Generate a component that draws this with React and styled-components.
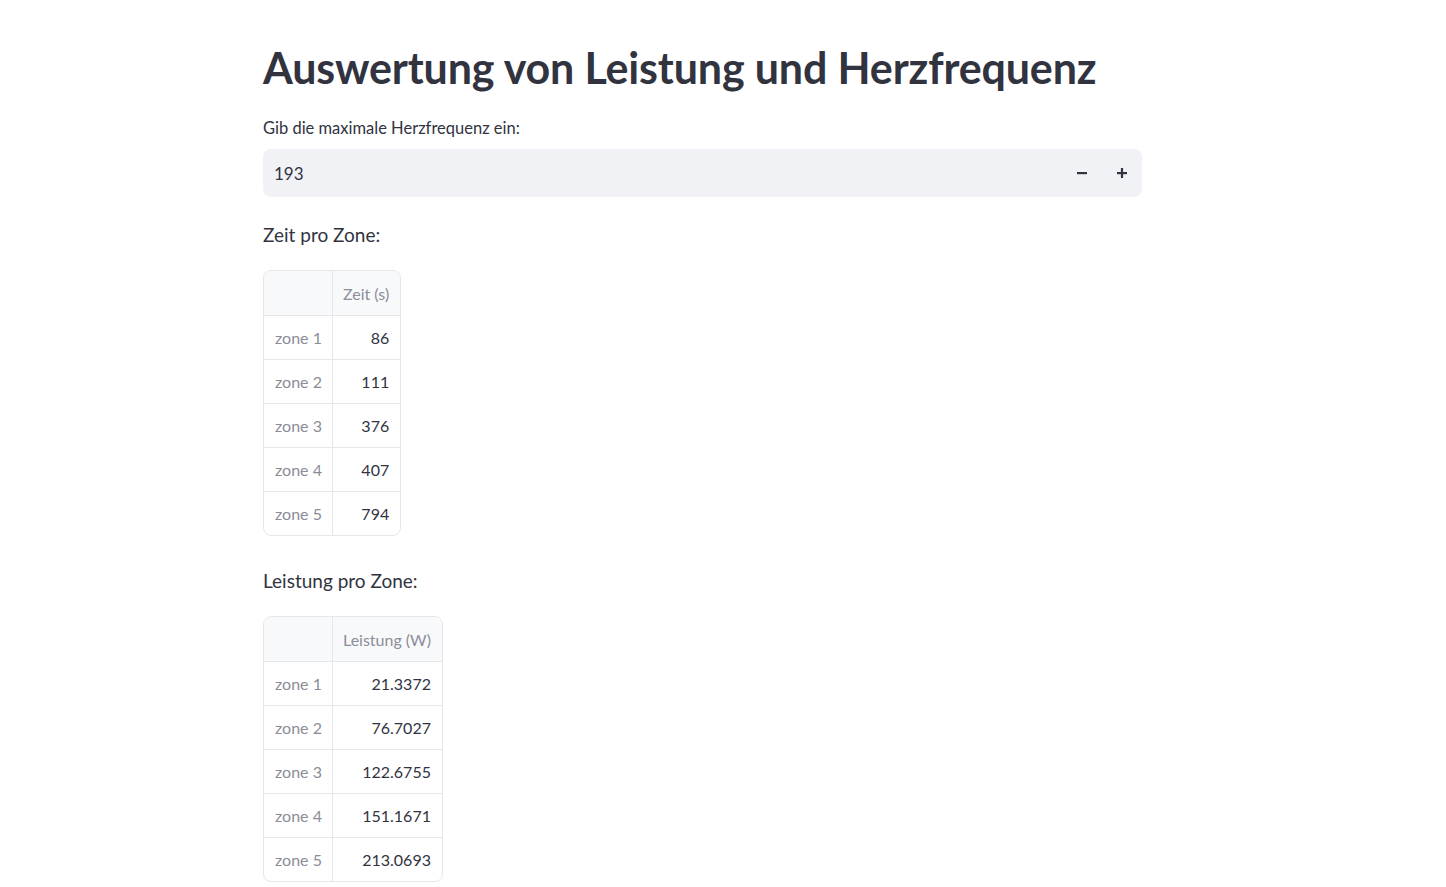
import React from 'react';
import styled, { createGlobalStyle } from 'styled-components';

const GlobalStyle = createGlobalStyle`
  body {
    margin: 0;
    background: #ffffff;
    color: #31333f;
    font-family: Lato, "Noto Sans", sans-serif;
  }
`;

const Main = styled.main`
  width: 879px;
  margin-left: 263px;
  padding-top: 40px;
  display: flex;
  flex-direction: column;
`;

const Title = styled.h1`
  margin: 0 0 22px;
  font-size: 43px;
  font-weight: 700;
  line-height: 56px;
  letter-spacing: -0.15px;
  color: #31333f;
`;

const Label = styled.label`
  font-size: 16.5px;
  line-height: 20px;
  margin-bottom: 11px;
`;

const NumberBox = styled.div`
  display: flex;
  align-items: center;
  height: 48px;
  background: #f0f2f6;
  border-radius: 8px;
  padding: 0 0 0 11px;
`;

const Value = styled.span`
  flex: 1;
  font-size: 17px;
`;

const StepButton = styled.button`
  width: 40px;
  height: 48px;
  border: none;
  background: transparent;
  display: flex;
  align-items: center;
  justify-content: center;
  color: #31333f;
  cursor: pointer;
  padding: 0;
`;

const Heading = styled.p`
  margin: 26px 0 23px;
  font-size: 19px;
  line-height: 24px;
`;

const Table = styled.table`
  border-collapse: separate;
  border-spacing: 0;
  border: 1px solid #e6e7eb;
  border-radius: 8px;
  overflow: hidden;
  font-size: 16px;
  align-self: flex-start;
  margin-bottom: 7px;
`;

const HeadCell = styled.th`
  height: 44px;
  padding: 0 11px 0 10px;
  background: #f8f9fb;
  color: #8b8d98;
  font-weight: 400;
  text-align: right;
  border-left: ${p => (p.$first ? 'none' : '1px solid #e6e7eb')};
  min-width: ${p => (p.$first ? '47px' : 'auto')};
`;

const IndexCell = styled.th`
  height: 43px;
  padding: 0 10px 0 11px;
  color: #8b8d98;
  font-weight: 400;
  text-align: left;
  border-top: 1px solid #e6e7eb;
`;

const DataCell = styled.td`
  height: 43px;
  padding: 0 11px 0 10px;
  text-align: right;
  color: #31333f;
  border-top: 1px solid #e6e7eb;
  border-left: 1px solid #e6e7eb;
`;

const zeit = [86, 111, 376, 407, 794];
const leistung = ['21.3372', '76.7027', '122.6755', '151.1671', '213.0693'];

function Stepper({ type }) {
  return (
    <StepButton aria-label={type}>
      <svg width="12" height="12" viewBox="0 0 12 12">
        <rect x="1" y="5" width="10" height="2.2" fill="currentColor" />
        {type === 'plus' && <rect x="4.9" y="1" width="2.2" height="10" fill="currentColor" />}
      </svg>
    </StepButton>
  );
}

function ZoneTable({ column, values }) {
  return (
    <Table>
      <thead>
        <tr>
          <HeadCell $first />
          <HeadCell>{column}</HeadCell>
        </tr>
      </thead>
      <tbody>
        {values.map((v, i) => (
          <tr key={i}>
            <IndexCell>zone {i + 1}</IndexCell>
            <DataCell>{v}</DataCell>
          </tr>
        ))}
      </tbody>
    </Table>
  );
}

export default function App() {
  return (
    <>
      <GlobalStyle />
      <Main>
        <Title>Auswertung von Leistung und Herzfrequenz</Title>
        <Label>Gib die maximale Herzfrequenz ein:</Label>
        <NumberBox>
          <Value>193</Value>
          <Stepper type="minus" />
          <Stepper type="plus" />
        </NumberBox>
        <Heading>Zeit pro Zone:</Heading>
        <ZoneTable column="Zeit (s)" values={zeit} />
        <Heading>Leistung pro Zone:</Heading>
        <ZoneTable column="Leistung (W)" values={leistung} />
      </Main>
    </>
  );
}
